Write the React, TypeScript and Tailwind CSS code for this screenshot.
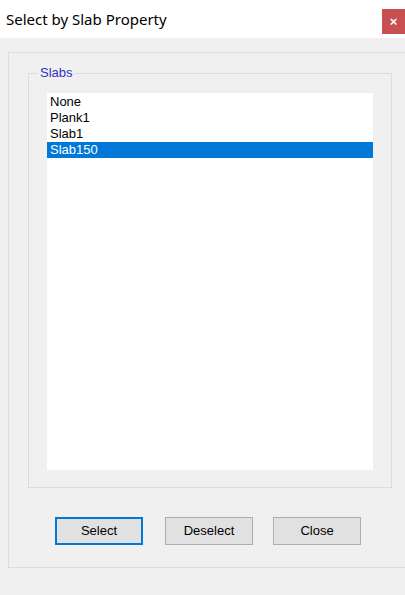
import React from 'react'

const slabs = ["None", "Plank1", "Slab1", "Slab150"]

function DialogButton({ label, focused }: { label: string, focused?: boolean }) {
  return (
    <button
      className={
        focused
          ? "w-[88px] h-[28px] bg-[#e1e1e1] border-2 border-[#0078d7] text-[13px] text-black"
          : "w-[88px] h-[28px] bg-[#e1e1e1] border border-[#adadad] text-[13px] text-black"
      }
    >
      {label}
    </button>
  )
}

export default function App() {
  return (
    <div className="w-[405px] h-[595px] flex flex-col bg-[#f0f0f0] font-['Liberation_Sans',Arial,sans-serif] overflow-hidden">
      <div className="h-[38px] bg-white flex flex-row items-center justify-between shrink-0">
        <span className="pl-[6px] text-[15px] text-black font-['Noto_Sans',sans-serif]">Select by Slab Property</span>
        <span className="w-[23px] h-[25px] bg-[#c75050] text-white text-[13px] font-bold flex items-center justify-center self-start mt-[9px]">
          ×
        </span>
      </div>

      <div className="pt-[14px] pl-[8px]">
        <div className="h-[516px] border-l border-t border-b border-[#dcdcdc] pt-[20px] pl-[19px]">
          <div className="relative w-[364px] h-[415px] border border-[#dcdcdc] pt-[19px] pl-[18px]">
            <span className="absolute left-[9px] top-[-9px] px-[2px] bg-[#f0f0f0] text-[13px] leading-[16px] text-[#3030c8]">
              Slabs
            </span>
            <div className="w-[326px] h-[377px] bg-white flex flex-col pt-px">
              {slabs.map((name, index) => {
                const selected = index === slabs.length - 1
                return (
                  <div
                    key={name}
                    className={
                      selected
                        ? "h-[16px] leading-[16px] pl-[3px] text-[13px] bg-[#0078d7] text-white"
                        : "h-[16px] leading-[16px] pl-[3px] text-[13px] text-black"
                    }
                  >
                    {name}
                  </div>
                )
              })}
            </div>
          </div>

          <div className="flex flex-row mt-[29px] pl-[27px]">
            <DialogButton label="Select" focused />
            <span className="w-[22px]" />
            <DialogButton label="Deselect" />
            <span className="w-[20px]" />
            <DialogButton label="Close" />
          </div>
        </div>
      </div>
    </div>
  )
}
